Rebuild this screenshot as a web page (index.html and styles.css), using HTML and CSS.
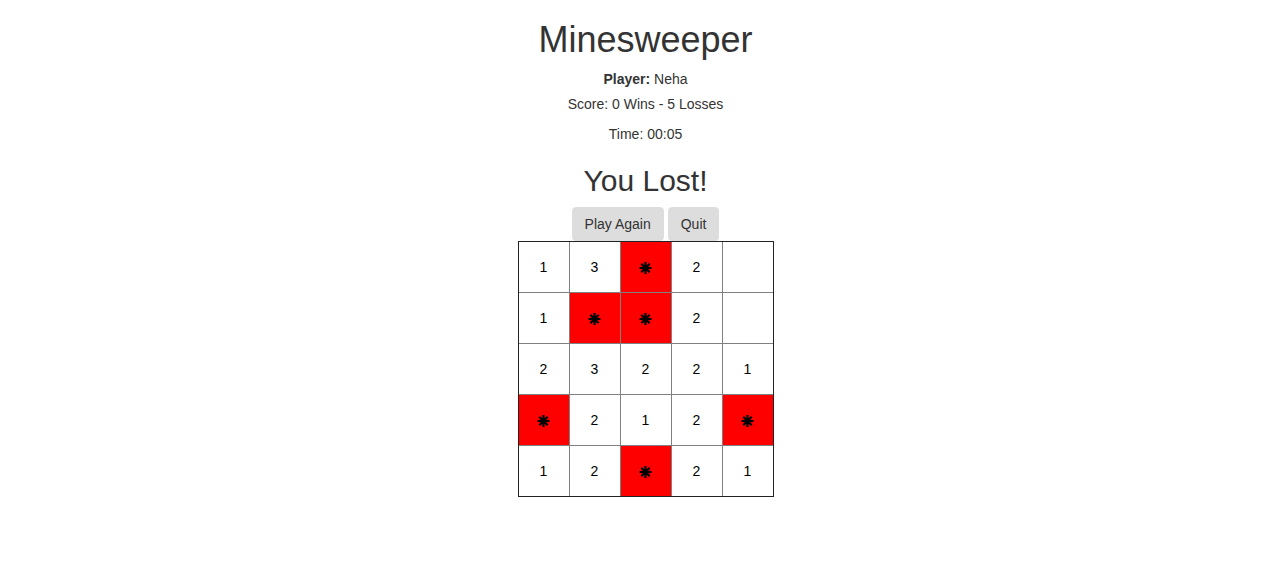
FILE: index.html
```html
<!DOCTYPE html>
<html lang="en">
<head>
<meta charset="utf-8">
<title>Minesweeper</title>
<link rel="stylesheet" href="styles.css">
</head>
<body>
<svg class="sprite" aria-hidden="true">
  <symbol id="mine" viewBox="0 0 14 14">
    <circle cx="6.5" cy="7" r="3"/>
    <path d="M6.5 1v12M.5 7h12M2.3 2.8l8.4 8.4M10.7 2.8l-8.4 8.4" fill="none" stroke="#000" stroke-width="2.2"/>
  </symbol>
</svg>
<main class="game">
  <h1 class="title">Minesweeper</h1>
  <p class="player"><strong>Player:</strong> Neha</p>
  <p class="score">Score: 0 Wins - 5 Losses</p>
  <p class="time">Time: 00:05</p>
  <h2 class="result">You Lost!</h2>
  <div class="actions">
    <button class="btn" type="button">Play Again</button>
    <button class="btn" type="button">Quit</button>
  </div>
  <table class="board">
    <tbody>
      <tr><td>1</td><td>3</td><td class="mine"><svg class="icon" role="img" aria-label="Mine"><use href="#mine"/></svg></td><td>2</td><td></td></tr>
      <tr><td>1</td><td class="mine"><svg class="icon" role="img" aria-label="Mine"><use href="#mine"/></svg></td><td class="mine"><svg class="icon" role="img" aria-label="Mine"><use href="#mine"/></svg></td><td>2</td><td></td></tr>
      <tr><td>2</td><td>3</td><td>2</td><td>2</td><td>1</td></tr>
      <tr><td class="mine"><svg class="icon" role="img" aria-label="Mine"><use href="#mine"/></svg></td><td>2</td><td>1</td><td>2</td><td class="mine"><svg class="icon" role="img" aria-label="Mine"><use href="#mine"/></svg></td></tr>
      <tr><td>1</td><td>2</td><td class="mine"><svg class="icon" role="img" aria-label="Mine"><use href="#mine"/></svg></td><td>2</td><td>1</td></tr>
    </tbody>
  </table>
</main>
</body>
</html>
```
FILE: styles.css
```css
* { box-sizing: border-box; }
body {
  margin: 0;
  padding-left: 15px;
  background: #fff;
  color: #333;
  font: 14px/20px "Liberation Sans", Arial, sans-serif;
}
.sprite { display: none; }
.game { text-align: center; }
.title { margin: 20px 0 10px; font-size: 36px; line-height: 39px; font-weight: 500; }
.player { margin: 0 0 5px; }
.score { margin: 0 0 10px; }
.time { margin: 0 0 20px; }
.result { margin: 0 0 10px; font-size: 30px; line-height: 33px; font-weight: 500; }
.actions { display: flex; justify-content: center; gap: 4px; }
.btn {
  padding: 6px 12px;
  border: 1px solid #ddd;
  border-radius: 4px;
  background: #ddd;
  color: #333;
  font: inherit;
}
.board {
  margin: 0 auto;
  border: 1px solid #222;
  border-spacing: 0;
  color: #000;
}
.board td {
  box-sizing: content-box;
  width: 50px;
  height: 50px;
  padding: 0;
  border: solid #808080;
  border-width: 0 1px 1px 0;
}
.board td:last-child { border-right-width: 0; }
.board tr:last-child td { border-bottom-width: 0; }
.board .mine { background: #f00; }
.icon { display: inline-block; width: 14px; height: 14px; vertical-align: -3px; }
```
